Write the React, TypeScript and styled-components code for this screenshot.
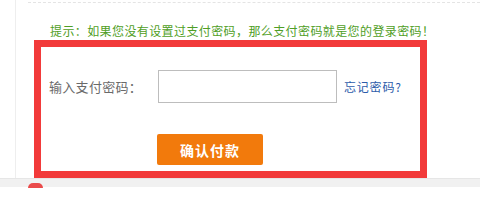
import React from "react";
import styled, { createGlobalStyle } from "styled-components";

const Global = createGlobalStyle`
  html, body { margin: 0; padding: 0; background: #fff; }
  body { font-family: "Noto Sans CJK SC", "Liberation Sans", sans-serif; }
  * { box-sizing: border-box; }
`;

const Page = styled.div`
  width: 480px;
  height: 214px;
  overflow: hidden;
  display: flex;
  flex-direction: column;
`;

const Content = styled.div`
  height: 178px;
  margin-left: 15px;
  border-left: 1px solid #eeeeee;
  display: flex;
  flex-direction: column;
`;

const DottedRule = styled.div`
  margin: 2px 0 0 12px;
  border-top: 1px dashed #e4e4e4;
`;

const Tip = styled.p`
  margin: 21px 0 0 34px;
  font-size: 12px;
  line-height: 14px;
  letter-spacing: 0.4px;
  color: #4f9e25;
  white-space: nowrap;
`;

const Frame = styled.div`
  margin: 2px 0 0 18px;
  width: 393px;
  height: 140px;
  border: 7px solid #f23a3a;
  display: flex;
  flex-direction: column;
`;

const Row = styled.div`
  display: flex;
  align-items: center;
  margin-top: 23px;
  padding-left: 8px;
`;

const Label = styled.label`
  width: 109px;
  font-size: 13px;
  letter-spacing: 0.3px;
  color: #6a6a6a;
  white-space: nowrap;
`;

const Input = styled.input`
  width: 179px;
  height: 33px;
  border: 1px solid #bdbdbd;
  outline: none;
  background: #fff;
`;

const ForgetLink = styled.a`
  margin-left: 7px;
  font-size: 12px;
  letter-spacing: 0.8px;
  color: #2d5caa;
  text-decoration: none;
  white-space: nowrap;
`;

const Button = styled.button`
  margin: 31px 0 0 116px;
  width: 106px;
  height: 31px;
  border: none;
  border-radius: 2px;
  background: #f27a0c;
  color: #fff;
  font-family: inherit;
  font-weight: bold;
  font-size: 14px;
  letter-spacing: 1px;
  cursor: pointer;
`;

const Footer = styled.div`
  position: relative;
  height: 9px;
  background: #f1f1f1;
  border-top: 1px solid #e6e6e6;
`;

const Dot = styled.span`
  position: absolute;
  left: 28px;
  top: 4px;
  width: 15px;
  height: 5px;
  border-radius: 8px 8px 0 0;
  background: #ea4b4b;
`;

export default function App() {
  return (
    <Page>
      <Global />
      <Content>
        <DottedRule />
        <Tip>提示：如果您没有设置过支付密码，那么支付密码就是您的登录密码！</Tip>
        <Frame>
          <Row>
            <Label>输入支付密码：</Label>
            <Input type="password" />
            <ForgetLink href="#">忘记密码?</ForgetLink>
          </Row>
          <Button>确认付款</Button>
        </Frame>
      </Content>
      <Footer>
        <Dot />
      </Footer>
    </Page>
  );
}
